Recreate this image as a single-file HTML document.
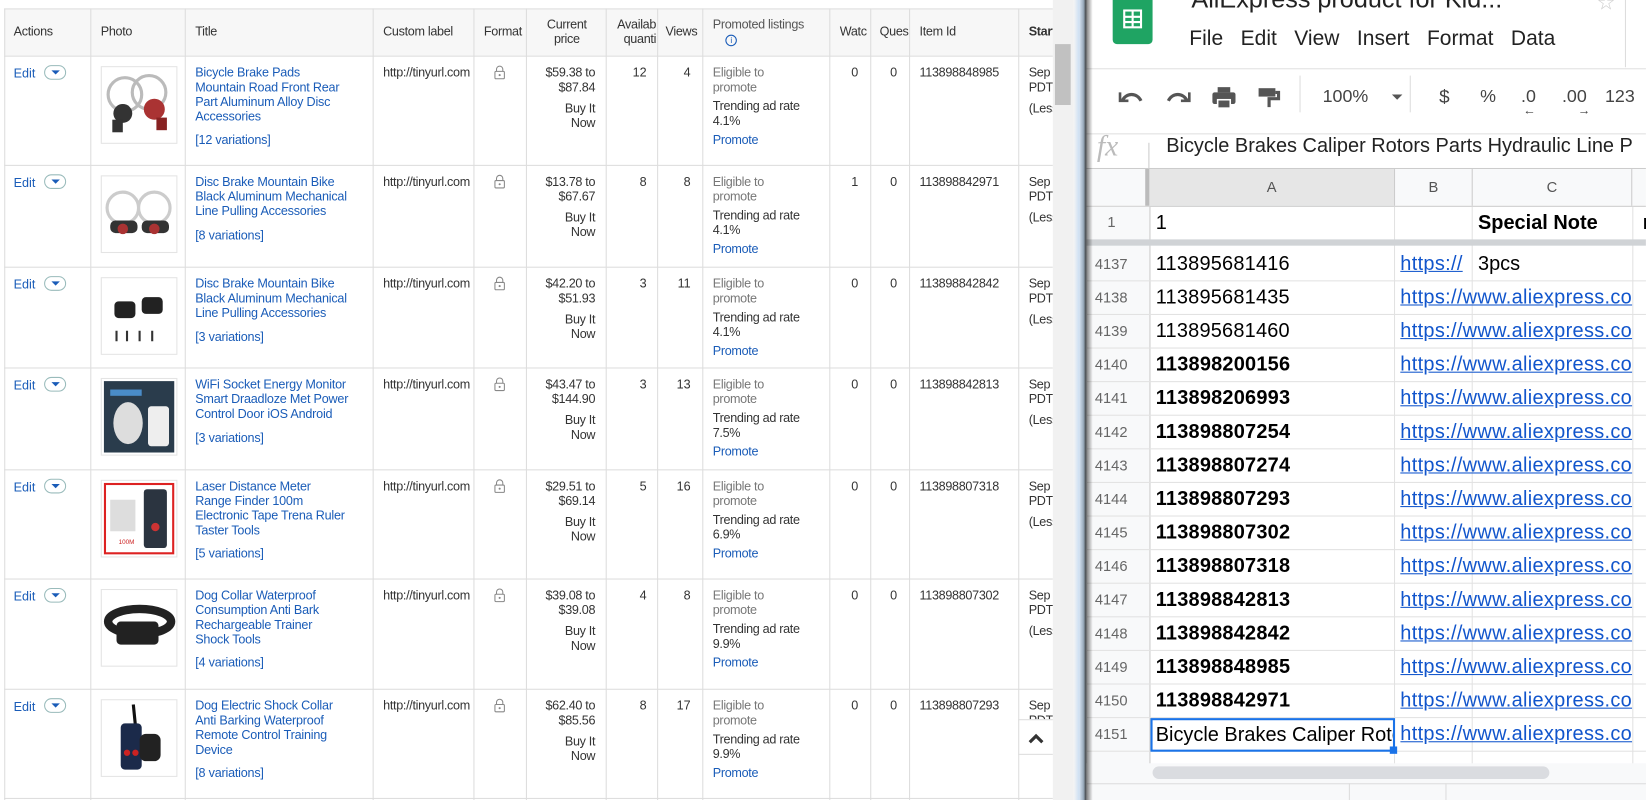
<!DOCTYPE html>
<html><head><meta charset="utf-8"><style>
*{margin:0;padding:0;box-sizing:border-box}
html,body{width:1646px;height:800px;overflow:hidden;background:#fff}
#w{position:absolute;left:0;top:0;width:1568px;height:762px;transform:scale(1.0497,1.0499);transform-origin:0 0;font-family:"Liberation Sans",Arial,sans-serif;font-size:12px;color:#333}
.a{position:absolute}
.vl{position:absolute;top:8px;height:754px;width:1px;background:#ddd}
.hl{position:absolute;left:4px;width:999px;height:1px;background:#ddd}
.hd{position:absolute;top:8px;height:45px;background:#f7f7f7}
.h{position:absolute;font-size:12px;color:#333;line-height:14px;letter-spacing:-.3px}
.b{color:#1a5cb8}
.t{position:absolute;left:186px;width:168px;line-height:14px;color:#1a5cb8;letter-spacing:-.2px}
.edit{position:absolute;left:13px;color:#1a5cb8}
.dd{position:absolute;left:42px;width:21px;height:14px;border:1px solid #9bb;border-radius:7px}
.dd:after{content:"";position:absolute;left:6px;top:4px;border:4px solid transparent;border-top:4px solid #1a5cb8}
.ph{position:absolute;left:96px;width:73px;height:74px;border:1px solid #e4e4e4;background:#fff}
.sm{letter-spacing:-.3px;line-height:14px}
.cl{position:absolute;left:365px;top:9px;width:83px;overflow:hidden;white-space:nowrap;letter-spacing:-.3px}
.lk{position:absolute;left:470px;top:9px}
.pr .p{margin-top:4px;display:block}
.sh{font-family:"Liberation Sans",Carlito,sans-serif}
.rn{position:absolute;left:1035px;width:60px;font-size:14px;color:#666;padding-left:8px}
.ca{position:absolute;left:1101px;font-size:19px;color:#000;letter-spacing:.2px}
.cb{position:absolute;left:1334px;font-size:19px;color:#1155cc;text-decoration:underline;white-space:nowrap;letter-spacing:.3px}
</style></head><body><div id="w">
<div class="hd" style="left:4px;width:999px"></div>
<div class="hl" style="top:8px"></div>
<div class="hl" style="top:53px"></div>
<div class="hl" style="top:157px"></div>
<div class="hl" style="top:254px"></div>
<div class="hl" style="top:350px"></div>
<div class="hl" style="top:447px"></div>
<div class="hl" style="top:551px"></div>
<div class="hl" style="top:656px"></div>
<div class="hl" style="top:760px"></div>
<div class="vl" style="left:4px"></div><div class="vl" style="left:86px"></div><div class="vl" style="left:176px"></div><div class="vl" style="left:355px"></div><div class="vl" style="left:451px"></div><div class="vl" style="left:501px"></div><div class="vl" style="left:577px"></div><div class="vl" style="left:626px"></div><div class="vl" style="left:669px"></div><div class="vl" style="left:790px"></div><div class="vl" style="left:829px"></div><div class="vl" style="left:866px"></div><div class="vl" style="left:970px"></div>
<div class="h" style="left:13px;top:23px">Actions</div>
<div class="h" style="left:96px;top:23px">Photo</div>
<div class="h" style="left:186px;top:23px">Title</div>
<div class="h" style="left:365px;top:23px">Custom label</div>
<div class="h" style="left:461px;top:23px;width:40px;overflow:hidden">Format</div>
<div class="h" style="left:505px;top:16px;width:70px;text-align:center">Current<br>price</div>
<div class="h" style="left:581px;top:16px;width:44px;text-align:right;overflow:hidden">Availab<br>quanti</div>
<div class="h" style="left:634px;top:23px">Views</div>
<div class="h" style="left:679px;top:16px;color:#555">Promoted listings<br><span style="display:inline-block;margin-left:12px;width:11px;height:11px;border:1px solid #1a5cb8;border-radius:50%;font-size:8px;line-height:9px;text-align:center;color:#1a5cb8">i</span></div>
<div class="h" style="left:800px;top:23px;width:29px;overflow:hidden">Watc</div>
<div class="h" style="left:838px;top:23px;width:28px;overflow:hidden">Ques</div>
<div class="h" style="left:876px;top:23px">Item Id</div>
<div class="h" style="left:980px;top:23px;width:23px;overflow:hidden;font-weight:bold">Start</div>

<!-- lock svg reused inline -->
<div class="a" style="left:0;top:53px;width:1003px;height:104px">
<div class="edit" style="top:10px">Edit</div><div class="dd" style="top:9px"></div>
<div class="ph" style="top:10px"><svg width="71" height="72"><circle cx="22" cy="26" r="16" fill="none" stroke="#bbb" stroke-width="3"/><circle cx="45" cy="24" r="16" fill="none" stroke="#bbb" stroke-width="3"/><circle cx="20" cy="44" r="9" fill="#333"/><circle cx="50" cy="40" r="10" fill="#a33"/><rect x="10" y="50" width="10" height="12" fill="#333"/><rect x="52" y="48" width="10" height="12" fill="#822"/></svg></div>
<div class="t" style="top:9px">Bicycle Brake Pads<br>Mountain Road Front Rear<br>Part Aluminum Alloy Disc<br>Accessories</div>
<div class="t" style="top:73px">[12 variations]</div>
<div class="cl">http://tinyurl.com</div>
<svg class="lk" width="12" height="14"><path d="M3 6V4a3 3 0 0 1 6 0v2" fill="none" stroke="#888"/><rect x="1.5" y="6" width="9" height="7" rx="1" fill="none" stroke="#888"/><circle cx="6" cy="9.5" r="1" fill="#888"/></svg>
<div class="a sm" style="left:505px;top:9px;width:62px;text-align:right">$59.38 to<br>$87.84<br><div style="margin-top:6px">Buy It<br>Now</div></div>
<div class="a" style="left:580px;top:9px;width:36px;text-align:right">12</div>
<div class="a" style="left:630px;top:9px;width:28px;text-align:right">4</div>
<div class="a sm" style="left:679px;top:9px"><span style="color:#777">Eligible to<br>promote</span><br><div style="margin-top:4px">Trending ad rate<br>4.1%</div><div class="b" style="margin-top:4px">Promote</div></div>
<div class="a" style="left:811px;top:9px">0</div><div class="a" style="left:848px;top:9px">0</div>
<div class="a sm" style="left:876px;top:9px">113898848985</div>
<div class="a sm" style="left:980px;top:9px;width:23px;overflow:hidden">Sep<br>PDT<div style="margin-top:6px">(Less</div></div>
</div>

<div class="a" style="left:0;top:157px;width:1003px;height:97px">
<div class="edit" style="top:10px">Edit</div><div class="dd" style="top:9px"></div>
<div class="ph" style="top:10px"><svg width="71" height="72"><circle cx="20" cy="30" r="15" fill="none" stroke="#ccc" stroke-width="3"/><circle cx="50" cy="30" r="15" fill="none" stroke="#ccc" stroke-width="3"/><rect x="8" y="42" width="26" height="12" rx="5" fill="#333"/><rect x="38" y="42" width="26" height="12" rx="5" fill="#333"/><circle cx="20" cy="50" r="5" fill="#a33"/><circle cx="50" cy="50" r="5" fill="#a33"/></svg></div>
<div class="t" style="top:9px">Disc Brake Mountain Bike<br>Black Aluminum Mechanical<br>Line Pulling Accessories</div>
<div class="t" style="top:60px">[8 variations]</div>
<div class="cl">http://tinyurl.com</div>
<svg class="lk" width="12" height="14"><path d="M3 6V4a3 3 0 0 1 6 0v2" fill="none" stroke="#888"/><rect x="1.5" y="6" width="9" height="7" rx="1" fill="none" stroke="#888"/><circle cx="6" cy="9.5" r="1" fill="#888"/></svg>
<div class="a sm" style="left:505px;top:9px;width:62px;text-align:right">$13.78 to<br>$67.67<br><div style="margin-top:6px">Buy It<br>Now</div></div>
<div class="a" style="left:580px;top:9px;width:36px;text-align:right">8</div>
<div class="a" style="left:630px;top:9px;width:28px;text-align:right">8</div>
<div class="a sm" style="left:679px;top:9px"><span style="color:#777">Eligible to<br>promote</span><br><div style="margin-top:4px">Trending ad rate<br>4.1%</div><div class="b" style="margin-top:4px">Promote</div></div>
<div class="a" style="left:811px;top:9px">1</div><div class="a" style="left:848px;top:9px">0</div>
<div class="a sm" style="left:876px;top:9px">113898842971</div>
<div class="a sm" style="left:980px;top:9px;width:23px;overflow:hidden">Sep<br>PDT<div style="margin-top:6px">(Less</div></div>
</div>

<div class="a" style="left:0;top:254px;width:1003px;height:96px">
<div class="edit" style="top:10px">Edit</div><div class="dd" style="top:9px"></div>
<div class="ph" style="top:10px"><svg width="71" height="72"><rect x="12" y="22" width="20" height="16" rx="4" fill="#222"/><rect x="38" y="18" width="20" height="16" rx="4" fill="#222"/><g stroke="#333" stroke-width="2"><path d="M14 50v10M24 50v10M36 50v10M48 50v10"/></g></svg></div>
<div class="t" style="top:9px">Disc Brake Mountain Bike<br>Black Aluminum Mechanical<br>Line Pulling Accessories</div>
<div class="t" style="top:60px">[3 variations]</div>
<div class="cl">http://tinyurl.com</div>
<svg class="lk" width="12" height="14"><path d="M3 6V4a3 3 0 0 1 6 0v2" fill="none" stroke="#888"/><rect x="1.5" y="6" width="9" height="7" rx="1" fill="none" stroke="#888"/><circle cx="6" cy="9.5" r="1" fill="#888"/></svg>
<div class="a sm" style="left:505px;top:9px;width:62px;text-align:right">$42.20 to<br>$51.93<br><div style="margin-top:6px">Buy It<br>Now</div></div>
<div class="a" style="left:580px;top:9px;width:36px;text-align:right">3</div>
<div class="a" style="left:630px;top:9px;width:28px;text-align:right">11</div>
<div class="a sm" style="left:679px;top:9px"><span style="color:#777">Eligible to<br>promote</span><br><div style="margin-top:4px">Trending ad rate<br>4.1%</div><div class="b" style="margin-top:4px">Promote</div></div>
<div class="a" style="left:811px;top:9px">0</div><div class="a" style="left:848px;top:9px">0</div>
<div class="a sm" style="left:876px;top:9px">113898842842</div>
<div class="a sm" style="left:980px;top:9px;width:23px;overflow:hidden">Sep<br>PDT<div style="margin-top:6px">(Less</div></div>
</div>

<div class="a" style="left:0;top:350px;width:1003px;height:97px">
<div class="edit" style="top:10px">Edit</div><div class="dd" style="top:9px"></div>
<div class="ph" style="top:10px"><svg width="71" height="72"><rect x="2" y="2" width="67" height="68" fill="#2a3c4c"/><ellipse cx="25" cy="42" rx="14" ry="20" fill="#ddd"/><rect x="44" y="26" width="20" height="38" rx="3" fill="#eee"/><rect x="8" y="10" width="30" height="6" fill="#4a8cc8"/></svg></div>
<div class="t" style="top:9px">WiFi Socket Energy Monitor<br>Smart Draadloze Met Power<br>Control Door iOS Android</div>
<div class="t" style="top:60px">[3 variations]</div>
<div class="cl">http://tinyurl.com</div>
<svg class="lk" width="12" height="14"><path d="M3 6V4a3 3 0 0 1 6 0v2" fill="none" stroke="#888"/><rect x="1.5" y="6" width="9" height="7" rx="1" fill="none" stroke="#888"/><circle cx="6" cy="9.5" r="1" fill="#888"/></svg>
<div class="a sm" style="left:505px;top:9px;width:62px;text-align:right">$43.47 to<br>$144.90<br><div style="margin-top:6px">Buy It<br>Now</div></div>
<div class="a" style="left:580px;top:9px;width:36px;text-align:right">3</div>
<div class="a" style="left:630px;top:9px;width:28px;text-align:right">13</div>
<div class="a sm" style="left:679px;top:9px"><span style="color:#777">Eligible to<br>promote</span><br><div style="margin-top:4px">Trending ad rate<br>7.5%</div><div class="b" style="margin-top:4px">Promote</div></div>
<div class="a" style="left:811px;top:9px">0</div><div class="a" style="left:848px;top:9px">0</div>
<div class="a sm" style="left:876px;top:9px">113898842813</div>
<div class="a sm" style="left:980px;top:9px;width:23px;overflow:hidden">Sep<br>PDT<div style="margin-top:6px">(Less</div></div>
</div>

<div class="a" style="left:0;top:447px;width:1003px;height:104px">
<div class="edit" style="top:10px">Edit</div><div class="dd" style="top:9px"></div>
<div class="ph" style="top:10px"><svg width="71" height="72"><rect x="3" y="3" width="65" height="66" fill="#fff" stroke="#d22" stroke-width="2"/><rect x="8" y="18" width="24" height="30" fill="#ddd"/><rect x="40" y="8" width="22" height="56" rx="3" fill="#2b3440"/><circle cx="51" cy="44" r="4" fill="#c33"/><text x="16" y="60" font-size="6" fill="#c22" font-family="Liberation Sans">100M</text></svg></div>
<div class="t" style="top:9px">Laser Distance Meter<br>Range Finder 100m<br>Electronic Tape Trena Ruler<br>Taster Tools</div>
<div class="t" style="top:73px">[5 variations]</div>
<div class="cl">http://tinyurl.com</div>
<svg class="lk" width="12" height="14"><path d="M3 6V4a3 3 0 0 1 6 0v2" fill="none" stroke="#888"/><rect x="1.5" y="6" width="9" height="7" rx="1" fill="none" stroke="#888"/><circle cx="6" cy="9.5" r="1" fill="#888"/></svg>
<div class="a sm" style="left:505px;top:9px;width:62px;text-align:right">$29.51 to<br>$69.14<br><div style="margin-top:6px">Buy It<br>Now</div></div>
<div class="a" style="left:580px;top:9px;width:36px;text-align:right">5</div>
<div class="a" style="left:630px;top:9px;width:28px;text-align:right">16</div>
<div class="a sm" style="left:679px;top:9px"><span style="color:#777">Eligible to<br>promote</span><br><div style="margin-top:4px">Trending ad rate<br>6.9%</div><div class="b" style="margin-top:4px">Promote</div></div>
<div class="a" style="left:811px;top:9px">0</div><div class="a" style="left:848px;top:9px">0</div>
<div class="a sm" style="left:876px;top:9px">113898807318</div>
<div class="a sm" style="left:980px;top:9px;width:23px;overflow:hidden">Sep<br>PDT<div style="margin-top:6px">(Less</div></div>
</div>

<div class="a" style="left:0;top:551px;width:1003px;height:105px">
<div class="edit" style="top:10px">Edit</div><div class="dd" style="top:9px"></div>
<div class="ph" style="top:10px"><svg width="71" height="72"><ellipse cx="36" cy="30" rx="30" ry="12" fill="none" stroke="#222" stroke-width="8"/><rect x="14" y="30" width="40" height="22" rx="4" fill="#222"/></svg></div>
<div class="t" style="top:9px">Dog Collar Waterproof<br>Consumption Anti Bark<br>Rechargeable Trainer<br>Shock Tools</div>
<div class="t" style="top:73px">[4 variations]</div>
<div class="cl">http://tinyurl.com</div>
<svg class="lk" width="12" height="14"><path d="M3 6V4a3 3 0 0 1 6 0v2" fill="none" stroke="#888"/><rect x="1.5" y="6" width="9" height="7" rx="1" fill="none" stroke="#888"/><circle cx="6" cy="9.5" r="1" fill="#888"/></svg>
<div class="a sm" style="left:505px;top:9px;width:62px;text-align:right">$39.08 to<br>$39.08<br><div style="margin-top:6px">Buy It<br>Now</div></div>
<div class="a" style="left:580px;top:9px;width:36px;text-align:right">4</div>
<div class="a" style="left:630px;top:9px;width:28px;text-align:right">8</div>
<div class="a sm" style="left:679px;top:9px"><span style="color:#777">Eligible to<br>promote</span><br><div style="margin-top:4px">Trending ad rate<br>9.9%</div><div class="b" style="margin-top:4px">Promote</div></div>
<div class="a" style="left:811px;top:9px">0</div><div class="a" style="left:848px;top:9px">0</div>
<div class="a sm" style="left:876px;top:9px">113898807302</div>
<div class="a sm" style="left:980px;top:9px;width:23px;overflow:hidden">Sep<br>PDT<div style="margin-top:6px">(Less</div></div>
</div>

<div class="a" style="left:0;top:656px;width:1003px;height:106px">
<div class="edit" style="top:10px">Edit</div><div class="dd" style="top:9px"></div>
<div class="ph" style="top:10px"><svg width="71" height="72"><path d="M30 4l2 20" stroke="#111" stroke-width="3"/><rect x="18" y="22" width="20" height="44" rx="4" fill="#1b2a4a"/><rect x="36" y="32" width="20" height="26" rx="6" fill="#222"/><circle cx="24" cy="50" r="3" fill="#c22"/><circle cx="32" cy="50" r="3" fill="#c22"/></svg></div>
<div class="t" style="top:9px">Dog Electric Shock Collar<br>Anti Barking Waterproof<br>Remote Control Training<br>Device</div>
<div class="t" style="top:73px">[8 variations]</div>
<div class="cl">http://tinyurl.com</div>
<svg class="lk" width="12" height="14"><path d="M3 6V4a3 3 0 0 1 6 0v2" fill="none" stroke="#888"/><rect x="1.5" y="6" width="9" height="7" rx="1" fill="none" stroke="#888"/><circle cx="6" cy="9.5" r="1" fill="#888"/></svg>
<div class="a sm" style="left:505px;top:9px;width:62px;text-align:right">$62.40 to<br>$85.56<br><div style="margin-top:6px">Buy It<br>Now</div></div>
<div class="a" style="left:580px;top:9px;width:36px;text-align:right">8</div>
<div class="a" style="left:630px;top:9px;width:28px;text-align:right">17</div>
<div class="a sm" style="left:679px;top:9px"><span style="color:#777">Eligible to<br>promote</span><br><div style="margin-top:4px">Trending ad rate<br>9.9%</div><div class="b" style="margin-top:4px">Promote</div></div>
<div class="a" style="left:811px;top:9px">0</div><div class="a" style="left:848px;top:9px">0</div>
<div class="a sm" style="left:876px;top:9px">113898807293</div>
<div class="a sm" style="left:980px;top:9px;width:23px;overflow:hidden">Sep<br>PDT</div>
</div>
<div class="a" style="left:970px;top:685px;width:33px;height:34px;background:#fff;border:1px solid #ddd;border-right:none"><svg width="33" height="34"><path d="M10 21l6-6 6 6" fill="none" stroke="#333" stroke-width="3"/></svg></div>
<div class="a" style="left:1003px;top:0;width:20px;height:762px;background:#f1f1f1"></div>
<div class="a" style="left:1005px;top:42px;width:15px;height:58px;background:#c1c1c1"></div>
<div class="a" style="left:1023px;top:0;width:12px;height:762px;background:linear-gradient(90deg,#f4f4f4,#cfe0f3 40%,#b9d2ee)"></div>
<div class="a" style="left:1028px;top:0;width:7px;height:762px;background:linear-gradient(90deg,#d8e6f5,#9ab 60%,#333)"></div>

<div class="a sh" style="left:1035px;top:0;width:533px;height:762px;background:#fff;overflow:hidden;color:#222">
 <div class="a" style="left:25px;top:-8px;width:38px;height:50px;background:#1fa463;border-radius:4px"><svg width="38" height="50"><g fill="none" stroke="#fff" stroke-width="2"><rect x="11" y="18" width="16" height="16"/><path d="M11 24h16M11 29h16M19 18v16"/></g></svg></div>
 <div class="a" style="left:100px;top:-14px;font-size:24px;color:#222;white-space:nowrap">AliExpress product for Kid...</div>
 <div class="a" style="left:486px;top:-10px;font-size:20px;color:#ccc">☆</div>
 <div class="a" style="left:98px;top:26px;font-size:20px;color:#222;white-space:nowrap">File&nbsp;&nbsp; Edit&nbsp;&nbsp; View&nbsp;&nbsp; Insert&nbsp;&nbsp; Format&nbsp;&nbsp; Data</div>
 <div class="a" style="left:513px;top:0;width:1px;height:64px;background:#ddd"></div>
 <div class="a" style="left:0;top:65px;width:533px;height:1px;background:#e0e0e0"></div>
 <svg class="a" style="left:30px;top:80px" width="240" height="26"><g fill="none" stroke="#555" stroke-width="3"><path d="M4 16c4-8 14-8 18 0"/><path d="M2 8v8h8" stroke-width="2.5"/><path d="M48 16c4-8 14-8 18 0"/><path d="M68 8v8h-8" stroke-width="2.5"/></g><rect x="90" y="8" width="22" height="11" rx="2" fill="#555"/><rect x="95" y="3" width="12" height="5" fill="#555"/><rect x="95" y="15" width="12" height="8" fill="#555" stroke="#fff" stroke-width="1.5"/><rect x="134" y="4" width="16" height="8" fill="#555"/><path d="M150 8h3v6h-9v8" fill="none" stroke="#555" stroke-width="3"/></svg>
 <div class="a" style="left:203px;top:72px;width:1px;height:35px;background:#ddd"></div>
 <div class="a" style="left:225px;top:82px;font-size:17px;color:#444">100%</div>
 <div class="a" style="left:291px;top:90px;border:5px solid transparent;border-top:5px solid #555"></div>
 <div class="a" style="left:308px;top:72px;width:1px;height:35px;background:#ddd"></div>
 <div class="a" style="left:336px;top:82px;font-size:18px;color:#444">$</div>
 <div class="a" style="left:375px;top:82px;font-size:17px;color:#444">%</div>
 <div class="a" style="left:414px;top:82px;font-size:17px;color:#444">.0</div>
 <div class="a" style="left:416px;top:98px;font-size:12px;color:#444">←</div>
 <div class="a" style="left:453px;top:82px;font-size:17px;color:#444">.00</div>
 <div class="a" style="left:468px;top:98px;font-size:12px;color:#444">→</div>
 <div class="a" style="left:494px;top:82px;font-size:17px;color:#444">123</div>
 <div class="a" style="left:0;top:127px;width:533px;height:1px;background:#e0e0e0"></div>
 <div class="a" style="left:10px;top:124px;font-size:28px;color:#bbb;font-family:'Liberation Serif',serif;font-style:italic">fx</div>
 <div class="a" style="left:59px;top:136px;width:1px;height:24px;background:#ccc"></div>
 <div class="a" style="left:76px;top:129px;font-size:19px;color:#222;white-space:nowrap">Bicycle Brakes Caliper Rotors Parts Hydraulic Line P</div>
 <div class="a" style="left:0;top:160px;width:533px;height:1px;background:#ccc"></div>
 <div class="a" style="left:0;top:161px;width:533px;height:35px;background:#f8f9fa"></div>
 <div class="a" style="left:56px;top:161px;width:4px;height:35px;background:#bbb"></div>
 <div class="a" style="left:60px;top:161px;width:233px;height:35px;background:#e6e6e6;text-align:center;line-height:35px;font-size:14px;color:#555">A</div>
 <div class="a" style="left:293px;top:161px;width:74px;height:35px;text-align:center;line-height:35px;font-size:14px;color:#555;border-left:1px solid #ccc">B</div>
 <div class="a" style="left:367px;top:161px;width:153px;height:35px;text-align:center;line-height:35px;font-size:14px;color:#555;border-left:1px solid #ccc;border-right:1px solid #ccc">C</div>
 <div class="a" style="left:0;top:196px;width:533px;height:1px;background:#ccc"></div>
 <div class="a" style="left:0;top:197px;width:60px;height:540px;background:#f8f9fa"></div>
 <div class="a" style="left:60px;top:197px;width:1px;height:540px;background:#ccc"></div>
 <div class="a" style="left:293px;top:197px;width:1px;height:540px;background:#e2e2e2"></div>
 <div class="a" style="left:367px;top:197px;width:1px;height:540px;background:#e2e2e2"></div>
 <div class="a" style="left:520px;top:197px;width:1px;height:540px;background:#e2e2e2"></div>
 <div class="a" style="left:0;top:228px;width:533px;height:6px;background:#d0d3d6"></div>
</div>
<div class="rn" style="top:203px;padding-left:20px">1</div>
<div class="ca" style="top:202px">1</div>
<div class="a" style="left:1408px;top:202px;font-size:19px;font-weight:bold;color:#000">Special Note</div>
<div class="a" style="left:1565px;top:202px;font-size:19px;font-weight:bold;color:#000">n</div>

<div class="a" style="left:1035px;top:236px;width:533px">
<div class="a" style="left:0;top:31px;width:533px;height:1px;background:#e2e2e2"></div><div class="a" style="left:0;top:63px;width:533px;height:1px;background:#e2e2e2"></div><div class="a" style="left:0;top:95px;width:533px;height:1px;background:#e2e2e2"></div><div class="a" style="left:0;top:127px;width:533px;height:1px;background:#e2e2e2"></div><div class="a" style="left:0;top:159px;width:533px;height:1px;background:#e2e2e2"></div><div class="a" style="left:0;top:191px;width:533px;height:1px;background:#e2e2e2"></div><div class="a" style="left:0;top:223px;width:533px;height:1px;background:#e2e2e2"></div><div class="a" style="left:0;top:255px;width:533px;height:1px;background:#e2e2e2"></div><div class="a" style="left:0;top:287px;width:533px;height:1px;background:#e2e2e2"></div><div class="a" style="left:0;top:319px;width:533px;height:1px;background:#e2e2e2"></div><div class="a" style="left:0;top:351px;width:533px;height:1px;background:#e2e2e2"></div><div class="a" style="left:0;top:383px;width:533px;height:1px;background:#e2e2e2"></div><div class="a" style="left:0;top:415px;width:533px;height:1px;background:#e2e2e2"></div><div class="a" style="left:0;top:447px;width:533px;height:1px;background:#e2e2e2"></div><div class="a" style="left:0;top:479px;width:533px;height:1px;background:#e2e2e2"></div>
</div>
<div class="sh">
<div class="rn" style="top:243px">4137</div><div class="ca" style="top:241px">113895681416</div><div class="cb" style="top:241px">https://</div><div class="a" style="left:1408px;top:241px;font-size:19px;color:#000">3pcs</div>
<div class="rn" style="top:275px">4138</div><div class="ca" style="top:273px">113895681435</div><div class="cb" style="top:273px">https://www.aliexpress.co</div>
<div class="rn" style="top:307px">4139</div><div class="ca" style="top:305px">113895681460</div><div class="cb" style="top:305px">https://www.aliexpress.co</div>
<div class="rn" style="top:339px">4140</div><div class="ca" style="top:337px;font-weight:bold">113898200156</div><div class="cb" style="top:337px">https://www.aliexpress.co</div>
<div class="rn" style="top:371px">4141</div><div class="ca" style="top:369px;font-weight:bold">113898206993</div><div class="cb" style="top:369px">https://www.aliexpress.co</div>
<div class="rn" style="top:403px">4142</div><div class="ca" style="top:401px;font-weight:bold">113898807254</div><div class="cb" style="top:401px">https://www.aliexpress.co</div>
<div class="rn" style="top:435px">4143</div><div class="ca" style="top:433px;font-weight:bold">113898807274</div><div class="cb" style="top:433px">https://www.aliexpress.co</div>
<div class="rn" style="top:467px">4144</div><div class="ca" style="top:465px;font-weight:bold">113898807293</div><div class="cb" style="top:465px">https://www.aliexpress.co</div>
<div class="rn" style="top:499px">4145</div><div class="ca" style="top:497px;font-weight:bold">113898807302</div><div class="cb" style="top:497px">https://www.aliexpress.co</div>
<div class="rn" style="top:531px">4146</div><div class="ca" style="top:529px;font-weight:bold">113898807318</div><div class="cb" style="top:529px">https://www.aliexpress.co</div>
<div class="rn" style="top:563px">4147</div><div class="ca" style="top:561px;font-weight:bold">113898842813</div><div class="cb" style="top:561px;width:221px;overflow:hidden">https://www.aliexpress.co</div>
<div class="rn" style="top:595px">4148</div><div class="ca" style="top:593px;font-weight:bold">113898842842</div><div class="cb" style="top:593px;width:221px;overflow:hidden">https://www.aliexpress.co</div>
<div class="rn" style="top:627px">4149</div><div class="ca" style="top:625px;font-weight:bold">113898848985</div><div class="cb" style="top:625px;width:221px;overflow:hidden">https://www.aliexpress.co</div>
<div class="rn" style="top:659px">4150</div><div class="ca" style="top:657px;font-weight:bold">113898842971</div><div class="cb" style="top:657px;width:221px;overflow:hidden">https://www.aliexpress.co</div>
<div class="rn" style="top:691px">4151</div>
<div class="a" style="left:1096px;top:684px;width:233px;height:32px;border:2px solid #1a73e8;overflow:hidden;white-space:nowrap;font-size:19px;color:#000;padding:4px 0 0 3px">Bicycle Brakes Caliper Rotors</div>
<div class="a" style="left:1324px;top:711px;width:7px;height:7px;background:#1a73e8"></div>
<div class="cb" style="top:689px;width:221px;overflow:hidden">https://www.aliexpress.co</div>
</div>
<div class="a" style="left:1035px;top:727px;width:533px;height:35px;background:#f8f9fa"></div>
<div class="a" style="left:1098px;top:730px;width:378px;height:12px;border-radius:6px;background:#dadce0"></div>
<div class="a" style="left:1035px;top:746px;width:533px;height:1px;background:#ddd"></div>
<div class="a" style="left:1285px;top:746px;width:1px;height:16px;background:#ddd"></div>
<div class="a" style="left:1377px;top:746px;width:1px;height:16px;background:#ddd"></div>
<div class="a" style="left:1035px;top:0;width:6px;height:762px;background:linear-gradient(90deg,rgba(0,0,0,.5),rgba(0,0,0,0))"></div>
</div></body></html>
